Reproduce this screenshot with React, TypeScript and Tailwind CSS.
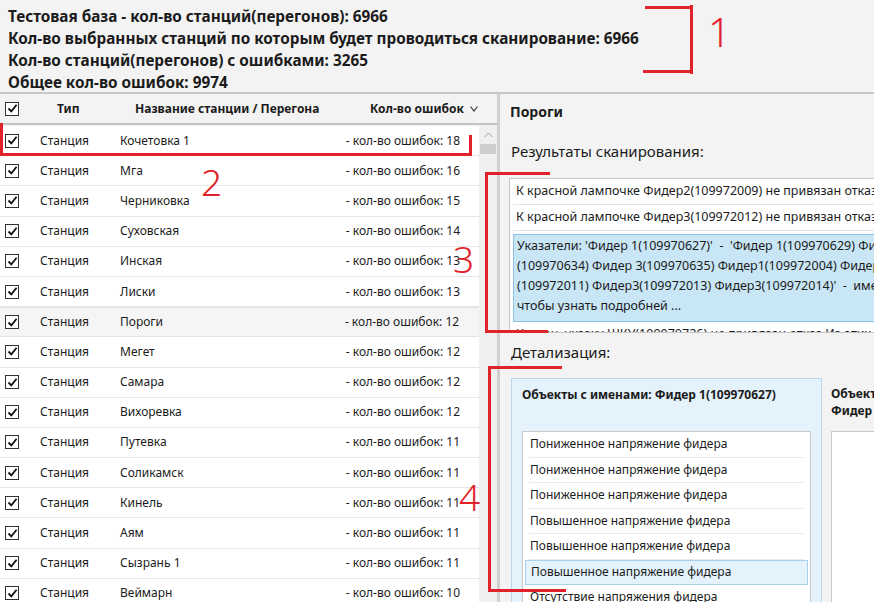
import React from 'react';

const rows: [string, number][] = [
  ['Кочетовка 1', 18],
  ['Мга', 16],
  ['Черниковка', 15],
  ['Суховская', 14],
  ['Инская', 13],
  ['Лиски', 13],
  ['Пороги', 12],
  ['Мегет', 12],
  ['Самара', 12],
  ['Вихоревка', 12],
  ['Путевка', 11],
  ['Соликамск', 11],
  ['Кинель', 11],
  ['Аям', 11],
  ['Сызрань 1', 11],
  ['Веймарн', 10],
];

const details = [
  'Пониженное напряжение фидера',
  'Пониженное напряжение фидера',
  'Пониженное напряжение фидера',
  'Повышенное напряжение фидера',
  'Повышенное напряжение фидера',
  'Повышенное напряжение фидера',
  'Отсутствие напряжения фидера',
];

function Check() {
  return (
    <div className="w-[14px] h-[14px] border border-[#333] bg-white flex items-center justify-center shrink-0">
      <svg width="11" height="11" viewBox="0 0 11 11">
        <path d="M1.5 5.5 L4.3 8.3 L9.6 1.8" fill="none" stroke="#111" strokeWidth="1.8" />
      </svg>
    </div>
  );
}

function Red({ className }: { className: string }) {
  return <div className={`absolute bg-[#e0232b] ${className}`} />;
}

function RedNum({ n, className }: { n: string; className: string }) {
  return (
    <div className={`absolute text-[#e0232b] leading-none font-['Noto_Sans',sans-serif] font-light ${className}`}>
      {n}
    </div>
  );
}

export default function App() {
  return (
    <div className="relative w-[874px] h-[602px] overflow-hidden bg-[#f3f3f3] text-[#1b1b1b] font-['Noto_Sans','Open_Sans',sans-serif]">
      {/* summary */}
      <div className="h-[94px] pl-2 pt-[5px] border-b-2 border-[#c8c8c8] text-[15.3px] font-bold leading-[22px] whitespace-nowrap">
        <div>Тестовая база - кол-во станций(перегонов): 6966</div>
        <div>Кол-во выбранных станций по которым будет проводиться сканирование: 6966</div>
        <div>Кол-во станций(перегонов) с ошибками: 3265</div>
        <div>Общее кол-во ошибок: 9974</div>
      </div>

      <div className="flex h-[508px]">
        {/* station list */}
        <div className="w-[500px] flex flex-col border-r-[3px] border-[#d0d0d0]">
          <div className="h-[31px] flex items-center border-b-2 border-[#c3c3c3] text-[12px] font-bold shrink-0">
            <div className="w-[40px] pl-[5px]">
              <Check />
            </div>
            <div className="w-[95px] pl-[17px]">Тип</div>
            <div className="w-[235px]">Название станции / Перегона</div>
            <div className="flex items-center gap-[6px]">
              Кол-во ошибок
              <svg width="8" height="6" viewBox="0 0 8 6">
                <path d="M0.5 0.5 L4 5 L7.5 0.5" fill="none" stroke="#333" strokeWidth="1.1" />
              </svg>
            </div>
          </div>
          <div className="flex flex-1 min-h-0 pt-[1px]">
            <div className="w-[482px] bg-white overflow-hidden">
              {rows.map(([name, n], i) => (
                <div
                  key={i}
                  className={`h-[30.2px] flex items-center text-[12px] whitespace-nowrap border-b ${
                    name === 'Пороги' ? 'bg-[#f5f5f5] border-y border-[#e2e2e2]' : 'border-[#e6e6e6] w-[480px]'
                  }`}
                >
                  <div className="w-[40px] pl-[5px]">
                    <Check />
                  </div>
                  <div className="w-[80px]">Станция</div>
                  <div className="flex-1">{name}</div>
                  <div className="w-[150px] pr-[20px] text-right">- кол-во ошибок: {n}</div>
                </div>
              ))}
            </div>
            <div className="w-[18px] bg-[#f0f0f0] flex flex-col items-center">
              <svg width="9" height="6" viewBox="0 0 9 6" className="mt-[6px]">
                <path d="M0.5 5 L4.5 1 L8.5 5" fill="none" stroke="#a0a0a0" strokeWidth="1" />
              </svg>
              <div className="w-[16px] h-[10px] bg-[#cdcdcd] mt-[6px]" />
            </div>
          </div>
        </div>

        {/* thresholds */}
        <div className="flex-1 min-w-0 overflow-hidden pl-[9px]">
          <div className="h-[32px] pt-[7px] pl-[1px] text-[14px] font-bold">Пороги</div>
          <div className="h-[52px] pt-[15px] pl-[2px] text-[15px] leading-[20px]">Результаты сканирования:</div>
          <div className="w-[400px] h-[155px] bg-white border border-[#c6c6c6] overflow-hidden text-[12.5px] px-[3px]">
            <div className="h-[26px] flex items-center pl-[3px] border-b border-[#e4e4e4] whitespace-nowrap">
              К красной лампочке Фидер2(109972009) не привязан отказ Из-этих
            </div>
            <div className="h-[26px] flex items-center pl-[3px] border-b border-[#e4e4e4] whitespace-nowrap">
              К красной лампочке Фидер3(109972012) не привязан отказ Из-этих
            </div>
            <div className="mt-[3px] bg-[#c9e6f6] border border-[#8fc3e6] pl-[3px] pt-[1px] pb-[5px] leading-[20px] whitespace-pre">
              <div>Указатели: 'Фидер 1(109970627)'  -  'Фидер 1(109970629) Фидер 2</div>
              <div>(109970634) Фидер 3(109970635) Фидер1(109972004) Фидер2</div>
              <div>(109972011) Фидер3(109972013) Фидер3(109972014)'  -  имеют</div>
              <div>чтобы узнать подробней ...</div>
            </div>
            <div className="pt-[2px] pl-[3px] leading-[20px] whitespace-nowrap">
              К ключ. указку ШКУ(109970726) не привязан отказ Из-этих
            </div>
          </div>
          <div className="h-[45px] pt-[9px] pl-[2px] text-[15px] leading-[20px]">Детализация:</div>
          <div className="flex">
            <div className="w-[311px] h-[240px] ml-[2px] bg-[#e4f2fb] border border-[#b6d9ee] px-[10px] shrink-0">
              <div className="h-[52px] pt-[7px] text-[12px] font-bold">Объекты с именами: Фидер 1(109970627)</div>
              <div className="bg-white border border-[#c9c9c9] h-[200px] px-[2px] text-[12px]">
                {details.map((d, i) => (
                  <div
                    key={i}
                    className={`h-[25.5px] flex items-center ${
                      i === 5
                        ? 'pl-[5px] bg-[#e4f2fb] border border-[#a9d0e8]'
                        : 'pl-[1px] mx-[4px] border-b border-[#ececec]'
                    }`}
                  >
                    {d}
                  </div>
                ))}
              </div>
            </div>
            <div className="pl-[9px] shrink-0 w-[200px]">
              <div className="h-[53px] pt-[7px] text-[12px] font-bold leading-[17px]">
                <div>Объекты с именами:</div>
                <div>Фидер 2(109970634)</div>
              </div>
              <div className="bg-white border border-[#c9c9c9] h-[200px]" />
            </div>
          </div>
        </div>
      </div>

      {/* annotations */}
      <Red className="left-[645px] top-[6px] w-[48px] h-[3px]" />
      <Red className="left-[690px] top-[5px] w-[3px] h-[69px]" />
      <Red className="left-[643px] top-[70px] w-[50px] h-[3px]" />
      <RedNum n="1" className="left-[708px] top-[12px] text-[40px]" />

      <Red className="left-0 top-[123px] w-[3px] h-[33px]" />
      <Red className="left-0 top-[153px] w-[472px] h-[3px]" />
      <Red className="left-[469px] top-[135px] w-[3px] h-[21px]" />
      <RedNum n="2" className="left-[201px] top-[163px] text-[37px]" />

      <Red className="left-[486px] top-[172px] w-[64px] h-[3px]" />
      <Red className="left-[485px] top-[172px] w-[3px] h-[161px]" />
      <Red className="left-[485px] top-[330px] w-[63px] h-[3px]" />
      <RedNum n="3" className="left-[453px] top-[240px] text-[37px]" />

      <Red className="left-[489px] top-[366px] w-[73px] h-[3px]" />
      <Red className="left-[488px] top-[366px] w-[3px] h-[226px]" />
      <Red className="left-[488px] top-[589px] w-[78px] h-[3px]" />
      <RedNum n="4" className="left-[459px] top-[478px] text-[37px]" />
    </div>
  );
}
